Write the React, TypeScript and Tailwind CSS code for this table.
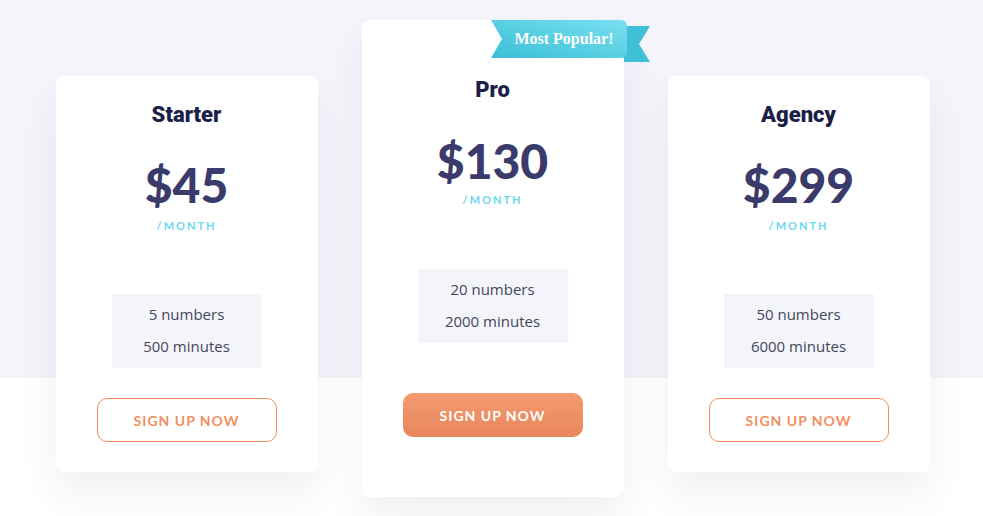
type Plan = {
  name: string;
  price: string;
  numbers: string;
  minutes: string;
  featured?: boolean;
};

const plans: Plan[] = [
  { name: "Starter", price: "$45", numbers: "5 numbers", minutes: "500 minutes" },
  { name: "Pro", price: "$130", numbers: "20 numbers", minutes: "2000 minutes", featured: true },
  { name: "Agency", price: "$299", numbers: "50 numbers", minutes: "6000 minutes" },
];

// Ribbon shown on the featured card
function Ribbon() {
  return (
    <>
      {/* tail behind the band */}
      <svg className="absolute left-[262px] top-[6px]" width="26" height="36" viewBox="0 0 26 36">
        <path d="M0 0 H26 L15 18 L26 36 H0 Z" fill="#3fc0d6" />
      </svg>
      <div className="absolute left-[129px] top-0 h-[38px] w-[136px]">
        <svg className="absolute inset-0" width="136" height="38" viewBox="0 0 136 38">
          <defs>
            <linearGradient id="band" x1="0" y1="1" x2="1" y2="0">
              <stop offset="0" stopColor="#3bbfd6" />
              <stop offset="1" stopColor="#78e0f1" />
            </linearGradient>
          </defs>
          <path d="M0 0 H130 Q136 0 136 6 V32 Q136 38 130 38 H0 L11 19 Z" fill="url(#band)" />
        </svg>
        <span className="absolute inset-y-0 left-[11px] right-0 flex items-center justify-center font-['Liberation_Serif',serif] text-[16px] font-bold text-white">
          Most Popular!
        </span>
      </div>
    </>
  );
}

function PlanCard({ plan }: { plan: Plan }) {
  const featured = !!plan.featured;
  return (
    <div
      className={`relative w-[262px] rounded-[8px] bg-white text-center shadow-[0_22px_40px_rgba(40,40,80,0.07)] ${
        featured ? "pt-[56px] pb-[60px]" : "mt-[56px] pt-[25px] pb-[30px]"
      }`}
    >
      {featured && <Ribbon />}

      <h2 className="font-['Roboto',sans-serif] text-[22px] font-black leading-[28px] text-[#1c1f48]">{plan.name}</h2>

      <div
        className={`font-['Lato',sans-serif] text-[48px] font-black leading-[48px] text-[#3a3a6b] ${
          featured ? "mt-[33px]" : "mt-[32px]"
        }`}
      >
        {plan.price}
      </div>
      <div
        className={`font-['Lato',sans-serif] text-[11px] font-bold leading-[14px] tracking-[2px] text-[#6dd6ef] ${
          featured ? "mt-[8px]" : "mt-[10px]"
        }`}
      >
        /MONTH
      </div>

      {/* Features */}
      <div
        className={`mx-auto w-[150px] bg-[#f4f5fb] pt-[4px] pb-[6px] font-['Open_Sans',sans-serif] text-[15px] leading-[32px] text-[#45465a] ${
          featured ? "mt-[62px]" : "mt-[61px]"
        }`}
      >
        <p>{plan.numbers}</p>
        <p>{plan.minutes}</p>
      </div>

      <button
        className={`mx-auto flex h-[44px] w-[180px] items-center justify-center rounded-[10px] font-['Lato',sans-serif] text-[14px] font-bold tracking-[1px] ${
          featured
            ? "mt-[50px] bg-gradient-to-b from-[#f49b6f] to-[#e8865c] text-white"
            : "mt-[30px] border border-[#f28f5e] text-[#f28f5e]"
        }`}
      >
        SIGN UP NOW
      </button>
    </div>
  );
}

export default function App() {
  return (
    <div className="h-[516px] w-full overflow-hidden bg-[linear-gradient(to_bottom,#f4f5fb_378px,#ffffff_378px)]">
      <div className="flex items-start justify-center gap-[44px] pl-[2px] pt-[20px]">
        {plans.map((plan) => (
          <PlanCard key={plan.name} plan={plan} />
        ))}
      </div>
    </div>
  );
}
